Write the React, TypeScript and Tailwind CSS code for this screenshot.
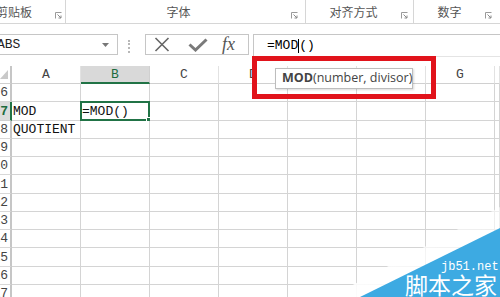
import React from "react";

const Launcher = () => (
  <svg width="7" height="7" viewBox="0 0 7 7" className="shrink-0">
    <path d="M0.5 6.5V0.5H6.5" fill="none" stroke="#9a9a9a" strokeWidth="1" />
    <path d="M2.5 2.5L6 6M6 3.5V6H3.5" fill="none" stroke="#8a8a8a" strokeWidth="1" />
  </svg>
);

const cols = ["A", "B", "C", "D", "E", "F", "G", ""];
const rows: { n: number; h: string }[] = [
  { n: 6, h: "h-[18px]" },
  { n: 7, h: "h-[19px]" },
  { n: 8, h: "h-[18px]" },
  { n: 9, h: "h-[18px]" },
  { n: 10, h: "h-[18px]" },
  { n: 11, h: "h-[19px]" },
  { n: 12, h: "h-[18px]" },
  { n: 13, h: "h-[18px]" },
  { n: 14, h: "h-[18px]" },
  { n: 15, h: "h-[19px]" },
  { n: 16, h: "h-[18px]" },
  { n: 17, h: "h-[18px]" },
];

const cellText: Record<string, string> = {
  "7-0": "MOD",
  "8-0": "QUOTIENT",
  "7-1": "=MOD()",
};

export default function App() {
  return (
    <div className="relative w-[500px] h-[297px] overflow-hidden bg-white font-['Liberation_Mono',monospace] text-[#222]">
      {/* Ribbon group labels */}
      <div className="flex h-[24px] border-b border-[#d6d6d6] text-[12px] text-[#555] font-['Noto_Sans_CJK_SC',sans-serif] leading-none">
        <div className="w-[66px] border-r border-[#d6d6d6] flex items-end justify-between pr-[3px] pb-[4px]">
          <span className="-ml-[4px] mb-[1px]">剪贴板</span>
          <Launcher />
        </div>
        <div className="w-[240px] border-r border-[#d6d6d6] flex items-end pr-[7px] pb-[4px]">
          <span className="flex-1 text-center mb-[1px]">字体</span>
          <Launcher />
        </div>
        <div className="w-[108px] border-r border-[#d6d6d6] flex items-end pr-[5px] pb-[4px]">
          <span className="flex-1 text-center mb-[1px]">对齐方式</span>
          <Launcher />
        </div>
        <div className="flex-1 flex items-end pr-[8px] pb-[4px]">
          <span className="flex-1 text-center mb-[1px]">数字</span>
          <Launcher />
        </div>
      </div>

      {/* Formula bar */}
      <div className="h-[42px] flex items-start pt-[10px]">
        <div className="w-[118px] h-[21px] border border-l-0 border-[#c6c6c6] flex items-center justify-between pr-[8px] text-[13px] text-[#222]">
          <span className="-ml-[3px]">ABS</span>
          <svg width="7" height="4" viewBox="0 0 7 4">
            <path d="M0 0H7L3.5 4Z" fill="#777" />
          </svg>
        </div>
        <div className="ml-[10px] mt-[6px] h-[13px] w-[2px] border-l-2 border-dotted border-[#b8b8b8]" />
        <div className="ml-[15px] w-[104px] h-[21px] border border-[#c6c6c6] flex items-center pl-[8px]">
          <svg width="16" height="15" viewBox="0 0 16 15">
            <path d="M1.5 1L14.5 14M14.5 1L1.5 14" stroke="#666" strokeWidth="1.6" fill="none" />
          </svg>
          <svg width="20" height="14" viewBox="0 0 20 14" className="ml-[18px]">
            <path d="M1.5 6.5L7.5 12L18.5 1.5" stroke="#7a7a7a" strokeWidth="3" fill="none" />
          </svg>
          <span className="ml-[14px] font-['Liberation_Serif',serif] italic text-[18px] leading-none text-[#555] -mt-[2px]">
            fx
          </span>
        </div>
        <div className="ml-[4px] flex-1 h-[23px] border-t border-l border-b border-[#c6c6c6] border-b-[#e4e4e4] flex items-center pl-[13px] text-[13px] text-black">
          <span>=MOD</span>
          <span className="inline-block w-px h-[14px] bg-black" />
          <span>()</span>
        </div>
      </div>

      {/* Grid */}
      <div className="grid grid-cols-[12px_repeat(7,69px)_1fr] text-[13px] leading-none">
        {/* header row */}
        <div className="h-[18px] border-r-2 border-b border-r-[#c6c6c6] border-b-[#d0d0d0] flex items-start pt-[4px]">
          <svg width="8" height="9" viewBox="0 0 8 9">
            <path d="M8 0V9H0Z" fill="#c9c9c9" />
          </svg>
        </div>
        {cols.map((c, i) =>
          i === 1 ? (
            <div
              key={c + i}
              className="h-[18px] bg-[#d9d9d9] border-r border-b-2 border-r-[#d0d0d0] border-b-[#217346] flex items-center justify-center text-[#1d6b3f]"
            >
              {c}
            </div>
          ) : (
            <div
              key={c + i}
              className="h-[18px] border-r border-b border-r-[#e2e2e2] border-b-[#d0d0d0] flex items-center justify-center text-[#444]"
            >
              {c}
            </div>
          )
        )}
        {rows.map((r) => (
          <React.Fragment key={r.n}>
            {r.n === 7 ? (
              <div className={`${r.h} bg-[#dcdcdc] border-r-2 border-b border-r-[#217346] border-b-[#d0d0d0] flex items-center justify-end pr-[2px] overflow-hidden whitespace-nowrap text-[#1d6b3f] font-bold`}>
                {r.n}
              </div>
            ) : (
              <div className={`${r.h} border-r-2 border-b border-r-[#c6c6c6] border-b-[#d8d8d8] flex items-center justify-end pr-[2px] overflow-hidden whitespace-nowrap text-[#444]`}>
                {r.n}
              </div>
            )}
            {cols.map((c, i) => {
              const key = `${r.n}-${i}`;
              const t = cellText[key];
              const selected = key === "7-1";
              return (
                <div
                  key={key}
                  className={`${r.h} relative border-r border-b border-[#d4d4d4] flex items-center pl-[1px] whitespace-nowrap text-[#111]`}
                >
                  {t ? <span className="relative z-10">{t}</span> : null}
                  {selected ? (
                    <div className="absolute -left-[1px] -top-[1px] -right-[1px] -bottom-[1px] border-2 border-[#217346]">
                      <div className="absolute -right-[3px] -bottom-[3px] w-[5px] h-[5px] bg-[#217346] border border-white" />
                    </div>
                  ) : null}
                </div>
              );
            })}
          </React.Fragment>
        ))}
      </div>

      {/* Tooltip */}
      <div className="absolute left-[275px] top-[68px] w-[138px] h-[21px] bg-white border border-[#bdbdbd] shadow-[1px_1px_2px_rgba(0,0,0,0.15)] flex items-center pl-[6px] font-['Open_Sans',sans-serif] text-[12.5px] text-[#444] whitespace-nowrap leading-none">
        <span className="font-bold">MOD</span>
        <span>(number, divisor)</span>
      </div>

      {/* Red annotation box */}
      <div className="absolute left-[252px] top-[56px] w-[184px] h-[43px] border-[5px] border-[#e1131b]" />

      {/* Watermark */}
      <svg className="absolute left-[320px] top-[197px]" width="180" height="100" viewBox="0 0 180 100">
        <defs>
          <linearGradient id="wf" x1="0" y1="1" x2="0.6" y2="0">
            <stop offset="0" stopColor="#ffffff" stopOpacity="0.95" />
            <stop offset="1" stopColor="#ffffff" stopOpacity="0.6" />
          </linearGradient>
        </defs>
        <polygon points="10,100 180,10 180,100" fill="url(#wf)" />
        <polygon points="40,100 180,31 180,100" fill="#3daae2" />
      </svg>
      <div className="absolute left-[441px] top-[261px] text-[12px] leading-none text-white font-['Liberation_Mono',monospace]">
        jb51.net
      </div>
      <div className="absolute left-[405px] top-[273px] text-[23px] leading-none text-white font-['Noto_Sans_CJK_SC',sans-serif]">
        脚本之家
      </div>
    </div>
  );
}
